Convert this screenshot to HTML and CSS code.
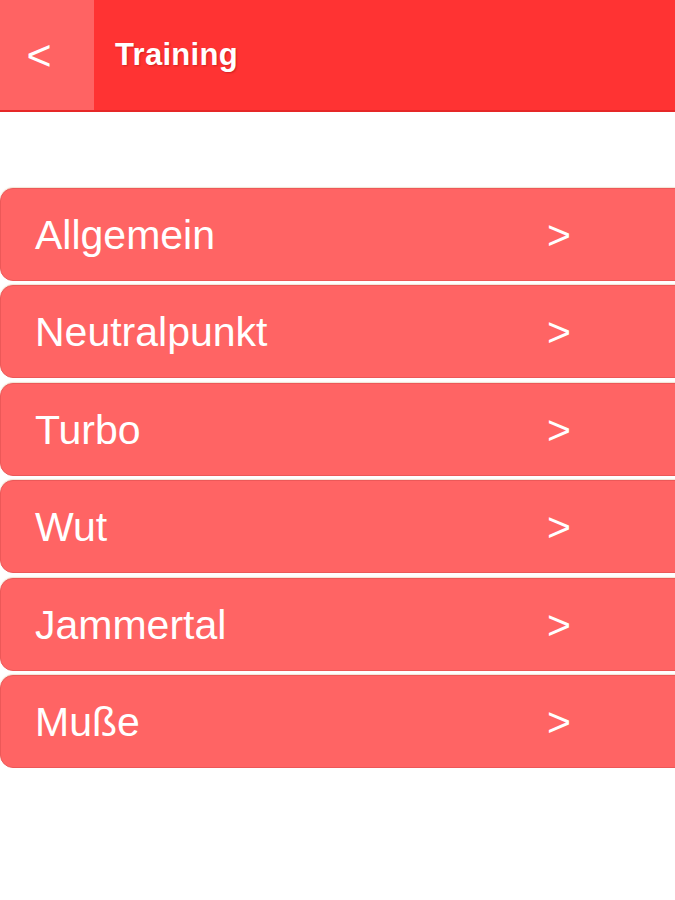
FILE: index.html
```html
<!DOCTYPE html>
<html lang="de">
<head>
<meta charset="utf-8">
<title>Training</title>
<link rel="stylesheet" href="styles.css">
</head>
<body>
<header class="topbar">
  <div class="back">&lt;</div>
  <h1 class="title">Training</h1>
</header>
<main class="menu">
  <div class="item"><span class="label">Allgemein</span><span class="arrow">&gt;</span></div>
  <div class="item"><span class="label">Neutralpunkt</span><span class="arrow">&gt;</span></div>
  <div class="item"><span class="label">Turbo</span><span class="arrow">&gt;</span></div>
  <div class="item"><span class="label">Wut</span><span class="arrow">&gt;</span></div>
  <div class="item"><span class="label">Jammertal</span><span class="arrow">&gt;</span></div>
  <div class="item"><span class="label">Muße</span><span class="arrow">&gt;</span></div>
</main>
</body>
</html>
```

FILE: styles.css
```css
html, body {
  margin: 0;
  padding: 0;
  background: #ffffff;
  overflow: hidden;
  font-family: "Liberation Sans", Arial, sans-serif;
}
.topbar {
  display: flex;
  height: 110px;
  background: #ff3333;
  border-bottom: 2px solid #e62828;
}
.back {
  width: 94px;
  background: #ff6363;
  color: #ffffff;
  font-size: 43px;
  display: flex;
  align-items: center;
  justify-content: center;
  padding-right: 16px;
  box-sizing: border-box;
  line-height: 1;
}
.title {
  margin: 0;
  padding-left: 21px;
  display: flex;
  align-items: center;
  color: #ffffff;
  font-size: 31px;
  font-weight: bold;
  letter-spacing: 0.3px;
  text-shadow: 1px 1px 2px rgba(120, 0, 0, 0.35);
}
.menu {
  display: flex;
  flex-direction: column;
  gap: 4.4px;
  padding-top: 76px;
}
.item {
  display: flex;
  align-items: center;
  height: 93px;
  box-sizing: border-box;
  width: calc(100% + 20px);
  background: #ff6464;
  border: 1px solid #ec5858;
  border-radius: 13px 0 0 13px;
  box-shadow: 0 -1px 1px rgba(230, 200, 170, 0.5);
  color: #ffffff;
  font-size: 41px;
  padding-left: 34px;
  padding-top: 2px;
}
.label {
  width: 512px;
}
.arrow {
  font-size: 41px;
}
```
